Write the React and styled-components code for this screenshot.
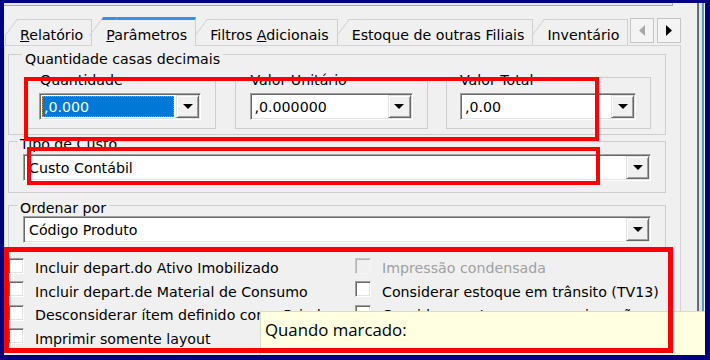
import React from 'react'
import styled, { createGlobalStyle } from 'styled-components'

const GlobalStyle = createGlobalStyle`
  * { box-sizing: border-box; }
  html, body { margin: 0; padding: 0; background: #f0f0f0; }
  body {
    font-family: "DejaVu Sans", Verdana, sans-serif;
    font-size: 14.2px;
    color: #000;
  }
`

const Frame = styled.div`
  position: relative;
  display: flex;
  width: 710px;
  height: 360px;
  border-style: solid;
  border-color: #00007d;
  border-width: 3px 5px 5px 4px;
  background: #f0f0f0;
  overflow: hidden;
`

const Main = styled.div`
  flex: 1;
  min-width: 0;
  display: flex;
  flex-direction: column;
`

const WindowEdge = styled.div`
  width: 8px;
  flex: none;
  background: linear-gradient(
    to right,
    #6b6b6b 0 2px,
    #e2e2e2 2px 5px,
    #3fa3d6 5px 7px,
    #f6f6f6 7px
  );
`

const TopStrip = styled.div`
  width: 669px;
  height: 3px;
  flex: none;
  background: #e6e6e6;
  border-right: 1px solid #a9a9a9;
  border-bottom: 1px solid #a9a9a9;
`

const TabControl = styled.div`
  width: 678px;
  margin-top: 11px;
  flex: 1;
  display: flex;
  flex-direction: column;
`

const TabStrip = styled.div`
  position: relative;
  z-index: 2;
  display: flex;
  height: 29px;
  flex: none;
`

const TabViewport = styled.div`
  width: 626px;
  display: flex;
  align-items: flex-end;
  padding-left: 2px;
  overflow: hidden;
`

const Tab = styled.div`
  position: relative;
  z-index: ${(p) => (p.$active ? 2 : 1)};
  flex: none;
  height: ${(p) => (p.$active ? 29 : 26)}px;
  margin: 0 0 ${(p) => (p.$active ? 0 : 1)}px 11px;
  padding: 7px 8px 0 3px;
  line-height: 17px;
  white-space: nowrap;
  background: #f0f0f0;
  border-top: ${(p) => (p.$active ? '3px solid #3a8ee6' : '1px solid #cfcfcf')};
  border-right: 1px solid #cfcfcf;

  &::before {
    content: '';
    position: absolute;
    top: ${(p) => (p.$active ? -3 : -1)}px;
    left: 0;
    width: 14px;
    height: 16px;
    background: #f0f0f0;
    border-top: ${(p) => (p.$active ? '3px solid #3a8ee6' : '1px solid #cfcfcf')};
    border-left: 1px solid #cfcfcf;
    transform-origin: top left;
    transform: skewX(-36.87deg);
  }

  &::after {
    content: '';
    position: absolute;
    top: ${(p) => (p.$active ? 13 : 15)}px;
    bottom: 0;
    left: -12px;
    width: 14px;
    background: #f0f0f0;
    border-left: 1px solid #cfcfcf;
  }

  span { position: relative; z-index: 1; }
`

const Scroller = styled.div`
  display: flex;
  gap: 3px;
  padding-top: 1px;
`

const ScrollButton = styled.div`
  width: 24px;
  height: 25px;
  display: flex;
  align-items: center;
  justify-content: center;
  border: 1px solid #c4c4c4;
  background: #f4f4f4;
`

const Panel = styled.div`
  flex: 1;
  width: 677px;
  margin-top: -1px;
  padding: 0 14px 0 3px;
  border: 1px solid #d4d4d4;
  border-bottom: none;
`

const Group = styled.div`
  position: relative;
  margin-top: ${(p) => p.$mt || 0}px;
  padding: ${(p) => p.$pad};
  width: ${(p) => (p.$w ? `${p.$w}px` : 'auto')};
  border: 1px solid #cdcdcd;
`

const Caption = styled.span`
  position: absolute;
  top: ${(p) => p.$top ?? -6.5}px;
  left: ${(p) => p.$left ?? 12}px;
  height: 13px;
  padding: 0 3px;
  line-height: 17px;
  background: #f0f0f0;
  white-space: nowrap;
`

const GroupRow = styled.div`
  display: flex;
  justify-content: space-between;
`

const Combo = styled.div`
  display: flex;
  height: 27px;
  padding: 1px;
  border: 1px solid;
  border-color: #a0a0a0 #ffffff #ffffff #a0a0a0;
  box-shadow: inset 1px 1px 0 #696969, inset -1px -1px 0 #e3e3e3;
  background: #fff;
`

const ComboText = styled.div`
  flex: 1;
  margin: 1px 2px 1px 1px;
  padding: 2px 0 0 ${(p) => p.$indent || 1}px;
  line-height: 17px;
  white-space: nowrap;
  overflow: hidden;
  color: ${(p) => (p.$selected ? '#fff' : '#000')};
  background: ${(p) => (p.$selected ? '#0078d7' : 'transparent')};
  border: 1px ${(p) => (p.$selected ? 'dotted #c89040' : 'solid transparent')};
`

const DropButton = styled.div`
  width: 23px;
  flex: none;
  display: flex;
  align-items: center;
  justify-content: center;
  border: 1px solid;
  border-color: #e3e3e3 #696969 #696969 #e3e3e3;
  box-shadow: inset 1px 1px 0 #fff, inset -1px -1px 0 #a0a0a0;
  background: #f0f0f0;
`

const Checks = styled.div`
  display: grid;
  grid-template-columns: 347px 1fr;
  grid-template-rows: repeat(4, 23.5px);
  grid-auto-flow: column;
  margin-top: 3px;
`

const Check = styled.div`
  display: flex;
  align-items: center;
  gap: 11px;
  white-space: nowrap;
  color: ${(p) => (p.$disabled ? '#a0a0a0' : '#000')};
`

const CheckLabel = styled.span`
  padding-top: 5px;
`

const Box = styled.span`
  width: 16px;
  height: 16px;
  flex: none;
  border: 1px solid;
  border-color: ${(p) => (p.$disabled ? '#c8c8c8 #f4f4f4 #f4f4f4 #c8c8c8' : '#a0a0a0 #fff #fff #a0a0a0')};
  box-shadow: ${(p) =>
    p.$disabled
      ? 'inset 1px 1px 0 #b4b4b4'
      : 'inset 1px 1px 0 #696969, inset -1px -1px 0 #e3e3e3'};
  background: ${(p) => (p.$disabled ? '#f0f0f0' : '#fff')};
`

const Tooltip = styled.div`
  position: absolute;
  left: 256px;
  top: 308px;
  right: -30px;
  bottom: -30px;
  padding: 7px 0 0 4px;
  border: 1px solid #dcdcc4;
  background: #ffffe1;
  font-family: "Open Sans", "Noto Sans", sans-serif;
  font-size: 16.8px;
  line-height: 22px;
  color: #000;
`

const Mark = styled.div`
  position: absolute;
  left: ${(p) => p.$x}px;
  top: ${(p) => p.$y}px;
  width: ${(p) => p.$w}px;
  height: ${(p) => p.$h}px;
  border: ${(p) => p.$t}px solid #ff0000;
  pointer-events: none;
`

const DownArrow = () => (
  <svg width="10" height="5" viewBox="0 0 10 5">
    <path d="M0 0H10L5 5Z" fill="#000" />
  </svg>
)

const SideArrow = ({ dir, color }) => (
  <svg width="6" height="11" viewBox="0 0 6 11">
    <path d={dir === 'left' ? 'M6 0V11L0 5.5Z' : 'M0 0V11L6 5.5Z'} fill={color} />
  </svg>
)

const Select = ({ value, selected, indent }) => (
  <Combo>
    <ComboText $selected={selected} $indent={indent}>
      {value}
    </ComboText>
    <DropButton>
      <DownArrow />
    </DropButton>
  </Combo>
)

const tabs = [
  { pre: '', key: 'R', post: 'elatório' },
  { pre: '', key: 'P', post: 'arâmetros', active: true },
  { pre: 'Filtros ', key: 'A', post: 'dicionais' },
  { pre: 'Estoque de outras Filiais', key: '', post: '' },
  { pre: 'Inventário', key: '', post: '' },
]

const options = [
  { label: 'Incluir depart.do Ativo Imobilizado' },
  { label: 'Incluir depart.de Material de Consumo' },
  { label: 'Desconsiderar ítem definido como Brinde' },
  { label: 'Imprimir somente layout' },
  { label: 'Impressão condensada', disabled: true },
  { label: 'Considerar estoque em trânsito (TV13)' },
  { label: 'Considerar estoque em consignação' },
]

export default function App() {
  return (
    <>
      <GlobalStyle />
      <Frame>
        <Main>
          <TopStrip />
          <TabControl>
            <TabStrip>
              <TabViewport>
                {tabs.map((t) => (
                  <Tab key={t.pre + t.key + t.post} $active={t.active}>
                    <span>
                      {t.pre}
                      {t.key && <u>{t.key}</u>}
                      {t.post}
                    </span>
                  </Tab>
                ))}
              </TabViewport>
              <Scroller>
                <ScrollButton>
                  <SideArrow dir="left" color="#a8a8a8" />
                </ScrollButton>
                <ScrollButton>
                  <SideArrow dir="right" color="#000" />
                </ScrollButton>
              </Scroller>
            </TabStrip>

            <Panel>
              <Group $mt={8} $pad="22px 14px 5px 15px">
                <Caption $top={-4.5} $left={13}>Quantidade casas decimais</Caption>
                <GroupRow>
                  <Group $w={192} $pad="15px 14px 8px 14px">
                    <Caption>Quantidade</Caption>
                    <Select value=",0.000" selected />
                  </Group>
                  <Group $w={193} $pad="15px 14px 8px 14px">
                    <Caption>Valor Unitário</Caption>
                    <Select value=",0.000000" />
                  </Group>
                  <Group $w={205} $pad="15px 14px 8px 13px">
                    <Caption $left={10}>Valor Total</Caption>
                    <Select value=",0.00" />
                  </Group>
                </GroupRow>
              </Group>

              <Group $mt={6} $pad="12px 14px 11px 14px">
                <Caption $left={8}>Tipo de Custo</Caption>
                <Select value="Custo Contábil" indent={2} />
              </Group>

              <Group $mt={12} $pad="10px 14px 7px 14px">
                <Caption $left={8}>Ordenar por</Caption>
                <Select value="Código Produto" indent={2} />
              </Group>

              <Checks>
                {options.map((o) => (
                  <Check key={o.label} $disabled={o.disabled}>
                    <Box $disabled={o.disabled} />
                    <CheckLabel>{o.label}</CheckLabel>
                  </Check>
                ))}
              </Checks>
            </Panel>
          </TabControl>
        </Main>
        <WindowEdge />

        <Tooltip>Quando marcado:</Tooltip>

        <Mark $x={20} $y={74} $w={575} $h={64} $t={4} />
        <Mark $x={23} $y={144} $w={573} $h={38} $t={4} />
        <Mark $x={0} $y={244} $w={669} $h={106} $t={5} />
      </Frame>
    </>
  )
}
